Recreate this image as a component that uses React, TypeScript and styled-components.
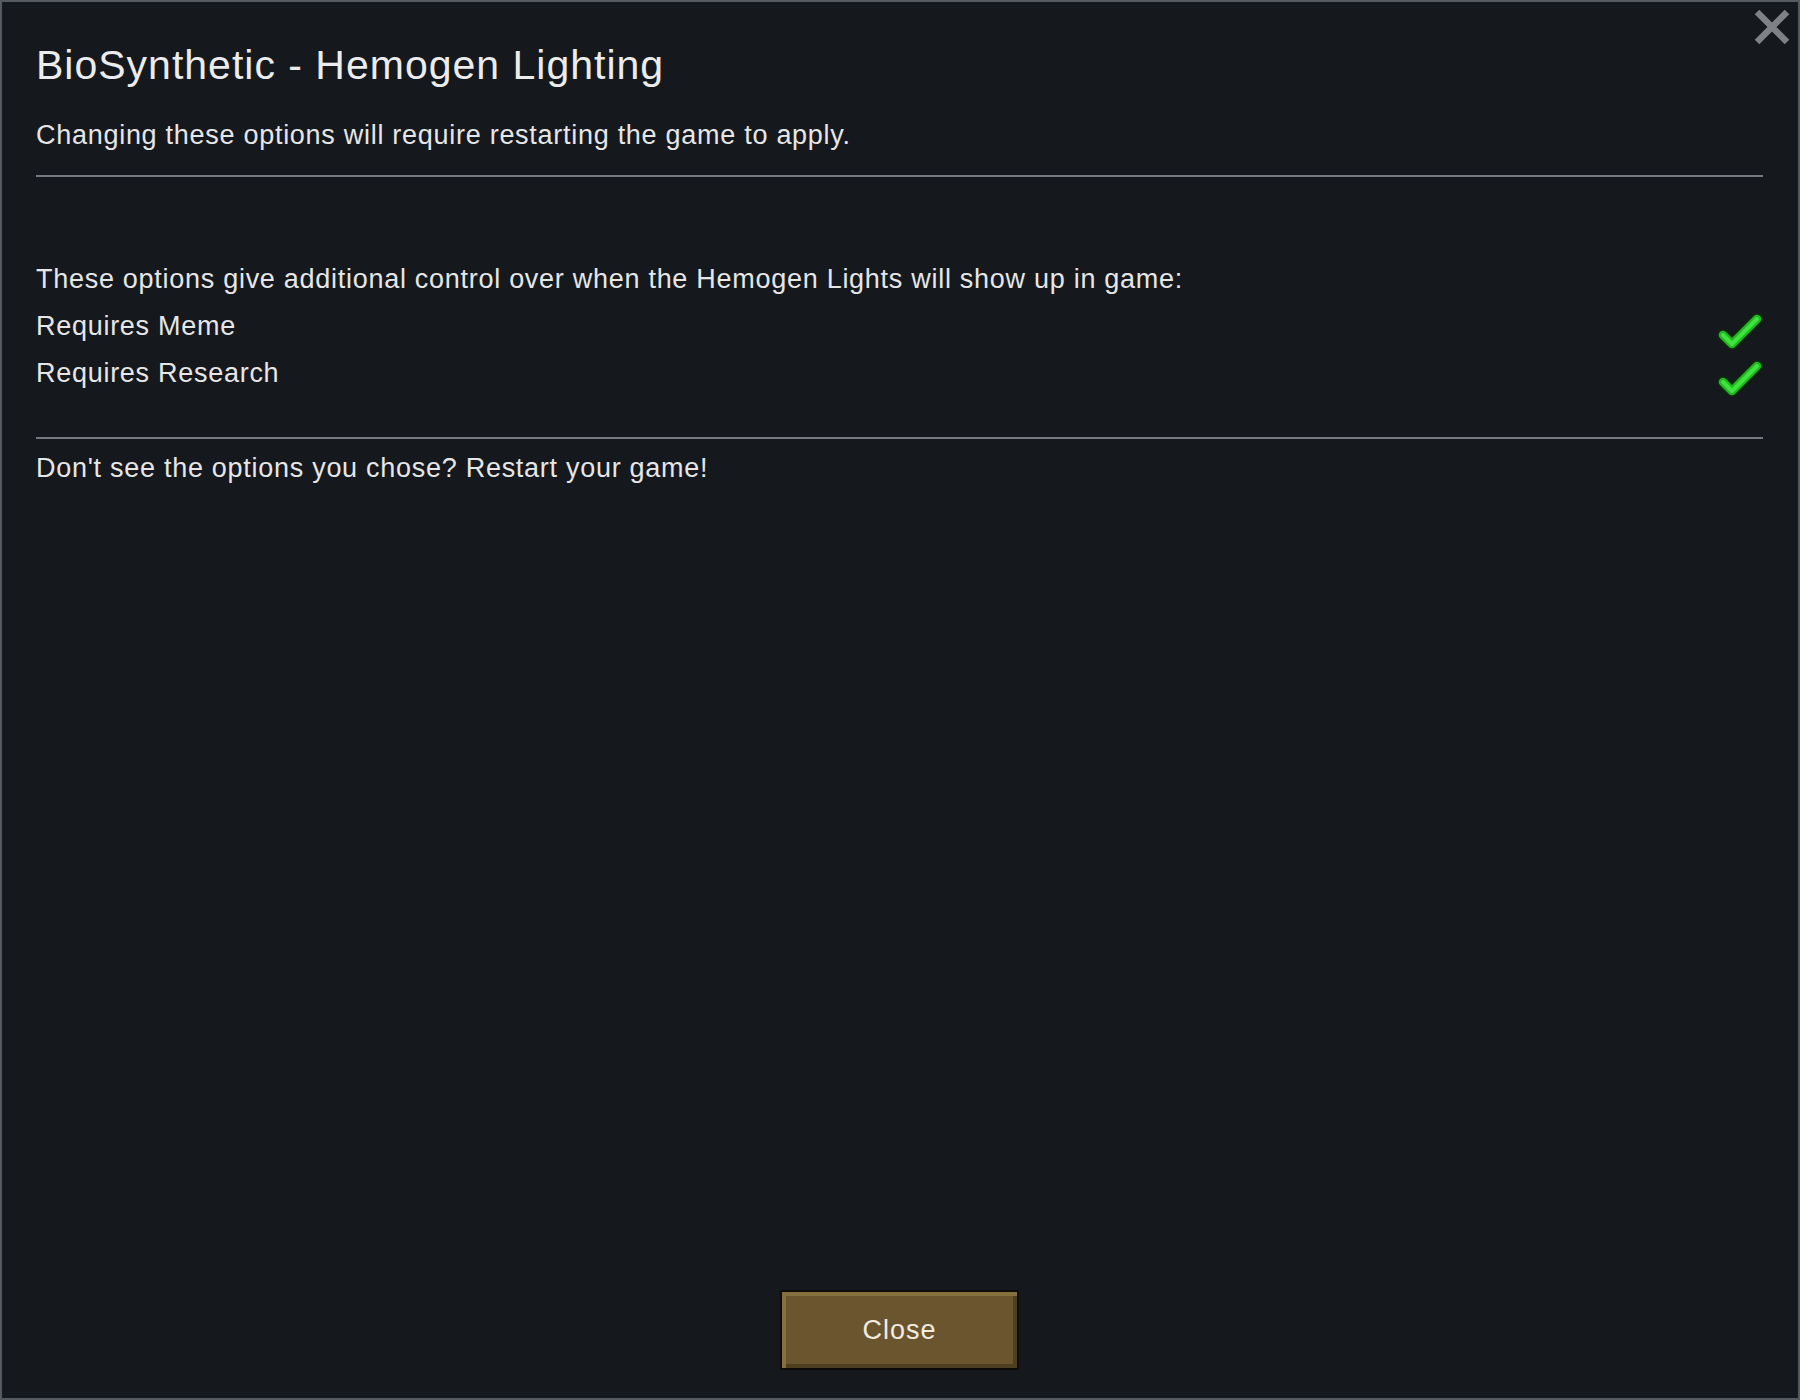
import React from "react";
import styled, { createGlobalStyle } from "styled-components";

const Global = createGlobalStyle`
  html, body { margin: 0; padding: 0; background: #15181d; }
  body { font-family: "Liberation Sans", Arial, sans-serif; }
  * { box-sizing: border-box; }
`;

const Window = styled.div`
  position: relative;
  width: 1800px;
  height: 1400px;
  border: 2px solid #555a61;
  background: #15181d;
  padding: 39px 35px 28px 34px;
  display: flex;
  flex-direction: column;
  color: #e8e8e8;
`;

const Title = styled.h1`
  margin: 0;
  font-size: 41px;
  line-height: 48px;
  font-weight: 400;
  letter-spacing: 1px;
  color: #ececec;
`;

const Text = styled.div<{ $mt?: number }>`
  margin-top: ${(p) => p.$mt ?? 0}px;
  font-size: 27px;
  line-height: 32px;
  letter-spacing: 0.72px;
  color: #e6e6e6;
`;

const Divider = styled.hr<{ $mt: number }>`
  margin: ${(p) => p.$mt}px 0 0 0;
  border: none;
  height: 2px;
  background: #76797f;
`;

const Row = styled.div<{ $mt?: number }>`
  margin-top: ${(p) => p.$mt ?? 0}px;
  height: 47px;
  display: flex;
  justify-content: space-between;
  align-items: flex-end;
  font-size: 27px;
  line-height: 46px;
  letter-spacing: 0.72px;
  color: #e6e6e6;
`;

const RowLabel = styled.span`
  align-self: stretch;
`;

const Check = styled.svg`
  width: 46px;
  height: 38px;
  flex: none;
`;

const Footer = styled.div`
  margin-top: auto;
  display: flex;
  justify-content: center;
`;

const CloseButton = styled.button`
  width: 239px;
  height: 80px;
  border: 2px solid #0e0c08;
  background: #6a552f;
  box-shadow: inset 4px 4px 0 #86703f, inset -4px -4px 0 #4e3f21;
  color: #f1ece0;
  font-family: "Liberation Sans", Arial, sans-serif;
  font-size: 27px;
  letter-spacing: 1px;
  padding: 0;
  cursor: pointer;
`;

const CloseX = styled.svg`
  position: absolute;
  top: 6px;
  right: 7px;
  width: 38px;
  height: 38px;
`;

const CheckMark = () => (
  <Check viewBox="0 0 46 38">
    <polyline points="6,23 15,32 40,7" fill="none" stroke="#0c2a0c" strokeWidth="12" strokeLinecap="round" strokeLinejoin="round" />
    <polyline points="6,23 15,32 40,7" fill="none" stroke="#1fb81f" strokeWidth="8.5" strokeLinecap="round" strokeLinejoin="round" />
    <polyline points="6,23 15,32 40,7" fill="none" stroke="#3fe23f" strokeWidth="4" strokeLinecap="round" strokeLinejoin="round" />
  </Check>
);

export default function App() {
  return (
    <>
      <Global />
      <Window>
        <Title>BioSynthetic - Hemogen Lighting</Title>
        <Text $mt={30}>Changing these options will require restarting the game to apply.</Text>
        <Divider $mt={24} />
        <Row $mt={79}>
          <RowLabel>These options give additional control over when the Hemogen Lights will show up in game:</RowLabel>
        </Row>
        <Row>
          <RowLabel>Requires Meme</RowLabel>
          <CheckMark />
        </Row>
        <Row>
          <RowLabel>Requires Research</RowLabel>
          <CheckMark />
        </Row>
        <Divider $mt={40} />
        <Row $mt={6}>
          <RowLabel>Don't see the options you chose? Restart your game!</RowLabel>
        </Row>
        <Footer>
          <CloseButton>Close</CloseButton>
        </Footer>
        <CloseX viewBox="0 0 38 38">
          <path d="M4 4 L34 34 M34 4 L4 34" stroke="#7e8287" strokeWidth="6.5" strokeLinecap="butt" />
        </CloseX>
      </Window>
    </>
  );
}
